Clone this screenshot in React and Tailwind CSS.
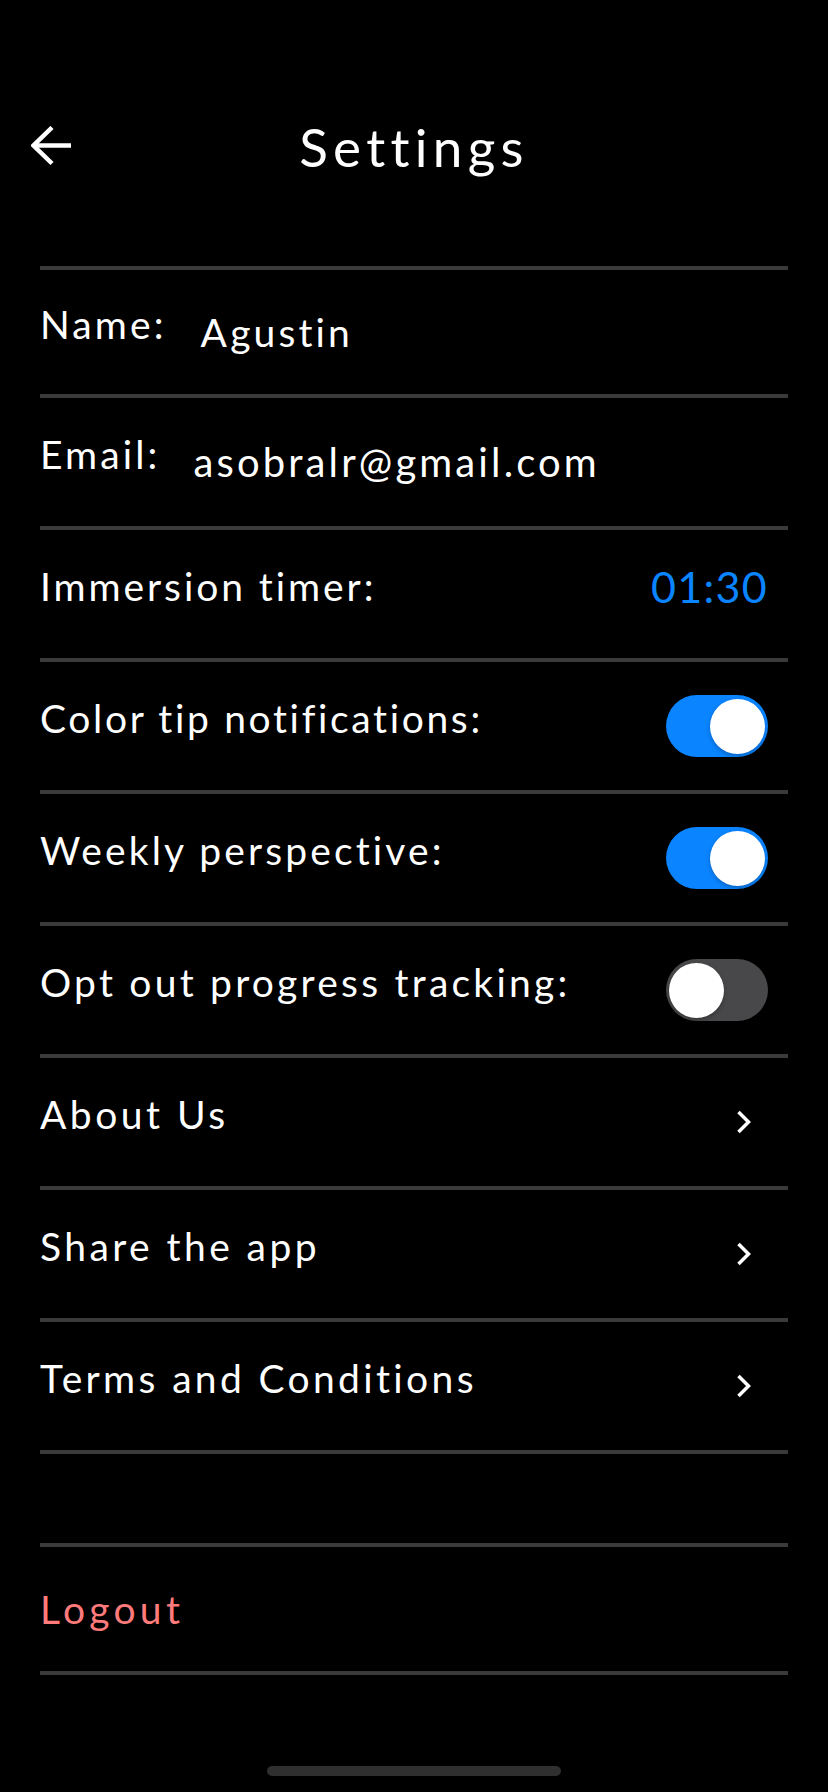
import React from "react";

function BackArrow() {
  return (
    <svg width="40" height="40" viewBox="0 0 40 40" fill="none" stroke="white" strokeWidth="4.5" strokeLinecap="butt" strokeLinejoin="miter">
      <path d="M2 19.5 H40" />
      <path d="M21 1.5 L2.5 19.5 L21 37.5" />
    </svg>
  );
}

function Chevron() {
  return (
    <svg width="16" height="24" viewBox="0 0 16 24" fill="none" stroke="white" strokeWidth="3.5" strokeLinecap="butt" strokeLinejoin="miter">
      <path d="M2.5 2 L12.5 12 L2.5 22" />
    </svg>
  );
}

function Toggle({ on }) {
  return (
    <div
      className={
        on
          ? "w-[102px] h-[62px] rounded-full bg-[#0a84ff] flex items-center justify-end px-[3px]"
          : "w-[102px] h-[62px] rounded-full bg-[#48484a] flex items-center justify-start px-[3px]"
      }
    >
      <div className="w-[55px] h-[55px] rounded-full bg-white shadow-[0_2px_4px_rgba(0,0,0,0.25)]" />
    </div>
  );
}

function Row({ h = "h-[132px]", children }) {
  return (
    <div className={`${h} border-t-4 border-[#3a3a3a] flex items-center`}>{children}</div>
  );
}

const label = "text-[39px] leading-none pb-4";

export default function App() {
  return (
    <div className="w-[828px] h-[1792px] bg-black text-white font-['Lato',sans-serif] flex flex-col overflow-hidden">
      <header className="mt-[100px] h-[92px] grid grid-cols-[1fr_auto_1fr] items-center">
        <div className="pl-[31px] flex items-center">
          <BackArrow />
        </div>
        <h1 className="text-[53px] leading-none tracking-[0.1em] font-normal">Settings</h1>
        <div />
      </header>

      <div className="mx-[40px] mt-[74px] flex flex-col">
        <Row h="h-[128px]">
          <span className={`${label} tracking-[0.08em]`}>Name:</span>
          <span className="ml-[34px] text-[39px] leading-none tracking-[0.08em]">Agustin</span>
        </Row>
        <Row>
          <span className={`${label} tracking-[0.08em]`}>Email:</span>
          <span className="ml-[33px] text-[40px] leading-none tracking-[0.078em]">asobralr@gmail.com</span>
        </Row>
        <Row>
          <span className={`${label} flex-1 tracking-[0.075em]`}>Immersion timer:</span>
          <span className="mr-[20px] text-[43px] leading-none tracking-[0.03em] text-[#0a84ff] pb-4">01:30</span>
        </Row>
        <Row>
          <span className={`${label} flex-1 tracking-[0.068em]`}>Color tip notifications:</span>
          <div className="mr-[20px]">
            <Toggle on />
          </div>
        </Row>
        <Row>
          <span className={`${label} flex-1 tracking-[0.08em]`}>Weekly perspective:</span>
          <div className="mr-[20px]">
            <Toggle on />
          </div>
        </Row>
        <Row>
          <span className={`${label} flex-1 tracking-[0.083em]`}>Opt out progress tracking:</span>
          <div className="mr-[20px]">
            <Toggle on={false} />
          </div>
        </Row>
        <Row>
          <span className={`${label} flex-1 tracking-[0.09em]`}>About Us</span>
          <div className="mr-[36px] flex items-center">
            <Chevron />
          </div>
        </Row>
        <Row>
          <span className={`${label} flex-1 tracking-[0.088em]`}>Share the app</span>
          <div className="mr-[36px] flex items-center">
            <Chevron />
          </div>
        </Row>
        <Row>
          <span className={`${label} flex-1 tracking-[0.086em]`}>Terms and Conditions</span>
          <div className="mr-[36px] flex items-center">
            <Chevron />
          </div>
        </Row>
        <div className="h-[4px] bg-[#3a3a3a]" />

        <div className="mt-[89px] h-[132px] border-y-4 border-[#3a3a3a] flex items-center">
          <span className="text-[39px] leading-none tracking-[0.11em] text-[#ff7b7b]">Logout</span>
        </div>
      </div>

      <div className="mt-auto mb-[16px] flex justify-center">
        <div className="w-[294px] h-[10px] rounded-full bg-[#2f2f2f]" />
      </div>
    </div>
  );
}
